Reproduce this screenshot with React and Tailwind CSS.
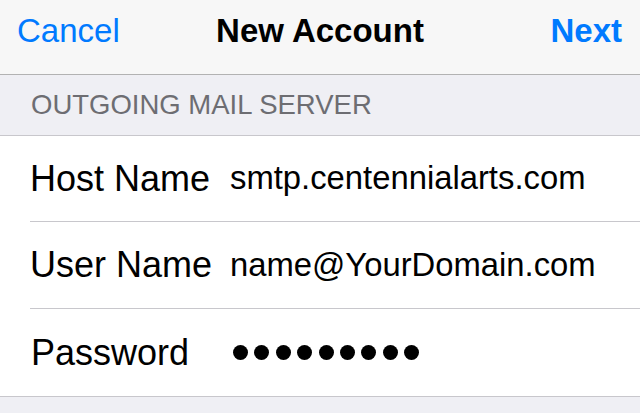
const fields = [
  { label: "Host Name", value: "smtp.centennialarts.com", h: "h-[86px]" },
  { label: "User Name", value: "name@YourDomain.com", h: "h-[87px]" },
  { label: "Password", secret: 9, h: "h-[87px]" },
];

const Row = ({ field, last }) => (
  <div className={`flex items-center pl-[31px] ${field.h} ${last ? "" : "ml-[30px] pl-px border-b border-[#c8c7cc]"}`}>
    <div className={`w-[200px] shrink-0 text-[36px] leading-none text-black ${last ? "" : "-ml-px"}`}>
      {field.label}
    </div>
    {field.secret ? (
      <div className="flex items-center gap-[6.4px] pl-[2px]">
        {Array.from({ length: field.secret }).map((_, i) => (
          <span key={i} className="block w-[15px] h-[15px] rounded-full bg-black" />
        ))}
      </div>
    ) : (
      <div className="text-[32.8px] leading-none text-black">{field.value}</div>
    )}
  </div>
);

export default function App() {
  return (
    <div
      className="w-[640px] h-[413px] overflow-hidden bg-[#efeff4]"
      style={{ fontFamily: '"Liberation Sans", Arial, sans-serif' }}
    >
      {/* nav bar */}
      <div className="relative h-[75px] bg-[#f7f7f7] border-b border-[#b2b2b2] flex items-start justify-between pt-[14px] pl-[17px] pr-[18px]">
        <span className="text-[33px] leading-none text-[#007aff]">Cancel</span>
        <span className="absolute left-0 right-0 top-[14px] text-center text-[33px] leading-none font-bold text-black">
          New Account
        </span>
        <span className="text-[33px] leading-none font-bold text-[#007aff]">Next</span>
      </div>

      {/* section header */}
      <div className="h-[61px] border-b border-[#c8c7cc] pt-[16px] pl-[31px]">
        <span className="text-[27.5px] leading-none text-[#6d6d72]">OUTGOING MAIL SERVER</span>
      </div>

      {/* fields */}
      <div className="bg-white border-b border-[#c8c7cc]">
        {fields.map((f, i) => (
          <Row key={f.label} field={f} last={i === fields.length - 1} />
        ))}
      </div>
    </div>
  );
}
